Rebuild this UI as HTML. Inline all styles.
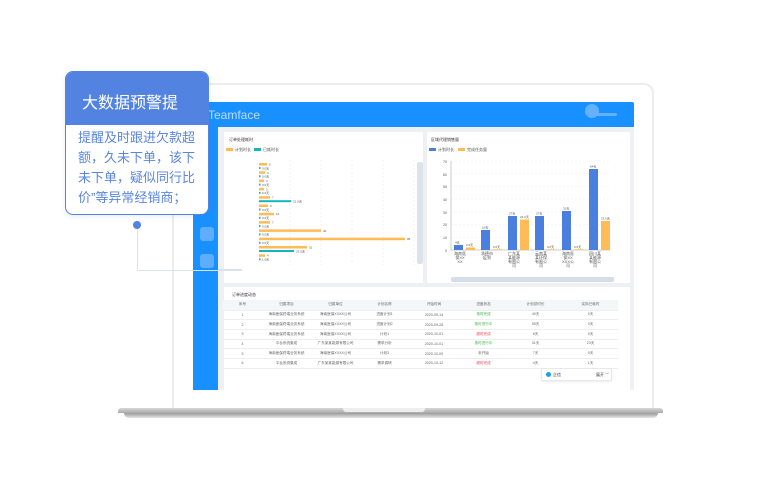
<!DOCTYPE html>
<html><head><meta charset="utf-8"><style>
*{margin:0;padding:0;box-sizing:border-box}
body{width:777px;height:500px;background:#fff;position:relative;overflow:hidden;font-family:"Liberation Sans","Noto Sans CJK SC",sans-serif}
.a{position:absolute}
.t{font-size:4px;color:#555;white-space:nowrap}
</style></head><body>
<!-- laptop frame -->
<div class="a" style="left:172px;top:83px;width:482px;height:328px;border:2px solid #ececec;border-bottom:none;border-radius:10px 10px 0 0;background:#fff"></div>
<div class="a" style="left:118px;top:408px;width:545px;height:5px;background:linear-gradient(#d8d8d8,#a9a9a9);border-radius:3px 3px 0 0"></div>
<div class="a" style="left:124px;top:413px;width:534px;height:5px;background:linear-gradient(#9a9a9a,#e6e6e6);border-radius:0 0 40px 40px"></div>
<div class="a" style="left:343px;top:408px;width:82px;height:4px;background:#eee;border-radius:0 0 3px 3px"></div>
<!-- screen -->
<div class="a" style="left:193px;top:102px;width:441px;height:25px;background:#1890ff;border-radius:2px 2px 0 0"></div>
<div class="a" style="left:208px;top:108px;color:#bfdcff;font-size:12px">Teamface</div>
<div class="a" style="left:585px;top:104px;width:14px;height:14px;border-radius:50%;background:#66b1ff"></div>
<div class="a" style="left:595px;top:113px;width:22px;height:3px;border-radius:2px;background:#66b1ff"></div>
<div class="a" style="left:193px;top:127px;width:25px;height:263px;background:#1890ff"></div>
<div class="a" style="left:200px;top:227px;width:14px;height:14px;border-radius:3px;background:#5eaeff"></div>
<div class="a" style="left:200px;top:254px;width:14px;height:14px;border-radius:3px;background:#5eaeff"></div>
<div class="a" style="left:218px;top:127px;width:416px;height:263px;background:#eef0f3"></div>
<!-- left chart -->
<div class="a" style="left:224px;top:132px;width:199px;height:151px;background:#fff"></div>
<div class="a t" style="left:229px;top:137px;color:#333">订单处理耗时</div>
<div class="a" style="left:226px;top:148px;width:7px;height:3px;background:#ffbb55"></div><div class="a t" style="left:235px;top:147px">计划时长</div>
<div class="a" style="left:254px;top:148px;width:7px;height:3px;background:#13b5c1"></div><div class="a t" style="left:263px;top:147px">已耗时长</div>
<div class="a" style="left:417px;top:162px;width:6px;height:102px;background:#dde3ec;border-radius:2px"></div>
<svg class="a" style="left:224px;top:160px" width="195" height="110" font-size="3" fill="#555" font-family="Liberation Sans">
<g stroke="#e5e5e5" stroke-dasharray="2,2" stroke-width="0.5"><line x1="66" y1="0" x2="66" y2="105"/><line x1="97" y1="0" x2="97" y2="105"/><line x1="128" y1="0" x2="128" y2="105"/><line x1="159" y1="0" x2="159" y2="105"/><line x1="190" y1="0" x2="190" y2="105"/></g>
<g fill="#ffbb55">
<rect x="35" y="3" width="8" height="2.5"/><rect x="35" y="11.3" width="6" height="2.5"/><rect x="35" y="19.6" width="5" height="2.5"/><rect x="35" y="27.9" width="5" height="2.5"/><rect x="35" y="36.2" width="11" height="2.5"/><rect x="35" y="44.5" width="9" height="2.5"/><rect x="35" y="52.8" width="15" height="2.5"/><rect x="35" y="61.1" width="11" height="2.5"/><rect x="35" y="69.4" width="62" height="2.5"/><rect x="35" y="77.7" width="146" height="2.5"/><rect x="35" y="86" width="48" height="2.5"/><rect x="35" y="94.3" width="6" height="2.5"/></g>
<g fill="#13b5c1">
<rect x="35" y="7" width="1.5" height="2"/><rect x="35" y="15.3" width="1.5" height="2"/><rect x="35" y="23.6" width="1.5" height="2"/><rect x="35" y="31.9" width="1.5" height="2"/><rect x="35" y="40.2" width="32" height="2"/><rect x="35" y="48.5" width="1.5" height="2"/><rect x="35" y="56.8" width="1.5" height="2"/><rect x="35" y="65.1" width="1.5" height="2"/><rect x="35" y="73.4" width="1.5" height="2"/><rect x="35" y="81.7" width="1.5" height="2"/><rect x="35" y="90" width="35" height="2"/><rect x="35" y="98.3" width="1.5" height="2"/></g>
<text x="45" y="5.5">5</text><text x="43" y="13.8">4</text><text x="42" y="22">3</text><text x="42" y="30.3">3</text><text x="48" y="38.6">7</text><text x="46" y="47">6</text><text x="52" y="55.2">10</text><text x="48" y="63.5">7</text><text x="99" y="71.8">40</text><text x="183" y="80.1">95</text><text x="85" y="88.4">31</text><text x="43" y="96.7">4</text>
<g><text x="38" y="9.3">0.0天</text><text x="38" y="17.6">0.0天</text><text x="38" y="25.9">0.0天</text><text x="38" y="34.2">0.0天</text><text x="69" y="42.5">21.0天</text><text x="38" y="50.8">0.0天</text><text x="38" y="59.1">0.0天</text><text x="38" y="67.4">0.0天</text><text x="38" y="75.7">0.0天</text><text x="38" y="84">0.0天</text><text x="72" y="92.3">23.0天</text><text x="38" y="100.6">1.0天</text></g>
</svg>
<div class="a" style="left:218px;top:269px;width:24px;height:1px;background:#d8e0ea"></div>
<!-- right chart -->
<div class="a" style="left:427px;top:132px;width:203px;height:151px;background:#fff"></div>
<div class="a t" style="left:431px;top:137px;color:#333">区域代理销售量</div>
<div class="a" style="left:429px;top:148px;width:7px;height:3px;background:#4a7fe0"></div><div class="a t" style="left:438px;top:147px">计划时长</div>
<div class="a" style="left:458px;top:148px;width:7px;height:3px;background:#ffbb55"></div><div class="a t" style="left:467px;top:147px">完成任务量</div>
<svg class="a" style="left:440px;top:158px" width="180" height="100" font-size="3.5" fill="#555" font-family="Liberation Sans">
<g stroke="#eee" stroke-dasharray="2,2" stroke-width="0.5"><line x1="11" y1="3" x2="170" y2="3"/><line x1="11" y1="15.7" x2="170" y2="15.7"/><line x1="11" y1="28.4" x2="170" y2="28.4"/><line x1="11" y1="41.1" x2="170" y2="41.1"/><line x1="11" y1="53.9" x2="170" y2="53.9"/><line x1="11" y1="66.6" x2="170" y2="66.6"/><line x1="11" y1="79.3" x2="170" y2="79.3"/></g>
<line x1="11" y1="3" x2="11" y2="92" stroke="#999" stroke-width="0.5"/><line x1="11" y1="92" x2="170" y2="92" stroke="#999" stroke-width="0.5"/>
<text x="3" y="5">70</text><text x="3" y="18">60</text><text x="3" y="30">50</text><text x="3" y="43">40</text><text x="3" y="56">30</text><text x="3" y="68">20</text><text x="3" y="81">10</text><text x="5" y="94">0</text>
<g fill="#4a7fe0"><rect x="14" y="87" width="9" height="5"/><rect x="41" y="72" width="9" height="20"/><rect x="68" y="58" width="9" height="34"/><rect x="95" y="58" width="9" height="34"/><rect x="122" y="53" width="9" height="39"/><rect x="149" y="11" width="9" height="81"/></g>
<g fill="#ffbb55"><rect x="26" y="89.5" width="9" height="2.5"/><rect x="80" y="61.5" width="9" height="30.5"/><rect x="161" y="63" width="9" height="29"/><rect x="53" y="91.3" width="9" height="0.7"/><rect x="107" y="91.3" width="9" height="0.7"/><rect x="134" y="91.3" width="9" height="0.7"/></g>
<g font-size="3"><text x="15" y="85.5">4天</text><text x="42" y="70.5">16天</text><text x="69" y="56.5">27天</text><text x="96" y="56.5">27天</text><text x="123" y="51.5">31天</text><text x="150" y="9.5">64天</text><text x="26" y="88">2.0天</text><text x="80" y="60">24.0天</text><text x="161" y="61.5">23.0天</text><text x="53" y="90">0.0天</text><text x="107" y="90">0.0天</text><text x="134" y="90">0.0天</text></g>
</svg>
<div class="a t" style="left:454px;top:252px;width:12px;text-align:center;line-height:4px">海南医<br>保XX<br>XX</div>
<div class="a t" style="left:481px;top:252px;width:12px;text-align:center;line-height:4px">承德市<br>疫到</div>
<div class="a t" style="left:508px;top:252px;width:12px;text-align:center;line-height:4px">广东某<br>某能源<br>有限公<br>司</div>
<div class="a t" style="left:535px;top:252px;width:12px;text-align:center;line-height:4px">云南某<br>某环保<br>有限公<br>司</div>
<div class="a t" style="left:562px;top:252px;width:12px;text-align:center;line-height:4px">海南医<br>保XX<br>XXX公<br>司</div>
<div class="a t" style="left:589px;top:252px;width:12px;text-align:center;line-height:4px">四川某<br>某能源<br>有限公<br>司</div>
<div class="a" style="left:451px;top:277px;width:163px;height:5px;background:#d5dde8;border-radius:2px"></div>
<!-- table -->
<div class="a" style="left:224px;top:287px;width:406px;height:103px;background:#fff"></div>
<div class="a t" style="left:232px;top:292px;color:#333">订单进度动态</div>
<table class="a" style="left:223px;top:300px;width:395px;border-collapse:collapse;font-size:3.6px;color:#666;text-align:center">
<colgroup><col style="width:39px"><col style="width:49px"><col style="width:49px"><col style="width:49px"><col style="width:50px"><col style="width:49px"><col style="width:55px"><col style="width:55px"></colgroup>
<tr style="background:#f5f6f8;height:10px"><td>序号</td><td>归属项目</td><td>归属单位</td><td>计划名称</td><td>开始时间</td><td>进度状态</td><td>计划总时长</td><td>实际已耗时</td></tr>
<tr style="height:9.7px;border-top:1px solid #eee"><td>1</td><td>海南医保终端业务系统</td><td>海南医保XXXX公司</td><td>进度计划1</td><td>2020-09-14</td><td style="color:#3cb54a">按时完成</td><td>40天</td><td>0天</td></tr>
<tr style="height:9.7px;border-top:1px solid #eee"><td>2</td><td>海南医保终端业务系统</td><td>海南医保XXXX公司</td><td>进度计划2</td><td>2020-09-28</td><td style="color:#3cb54a">按时进行中</td><td>95天</td><td>0天</td></tr>
<tr style="height:9.7px;border-top:1px solid #eee"><td>3</td><td>海南医保终端业务系统</td><td>海南医保XXXX公司</td><td>计划1</td><td>2020-10-01</td><td style="color:#f5414a">超时完成</td><td>6天</td><td>0天</td></tr>
<tr style="height:9.7px;border-top:1px solid #eee"><td>4</td><td>平台系统集成</td><td>广东某某能源有限公司</td><td>需求分析</td><td>2020-10-01</td><td style="color:#3cb54a">按时进行中</td><td>31天</td><td>23天</td></tr>
<tr style="height:9.7px;border-top:1px solid #eee"><td>5</td><td>海南医保终端业务系统</td><td>海南医保XXXX公司</td><td>计划3</td><td>2020-10-09</td><td>未开始</td><td>7天</td><td>0天</td></tr>
<tr style="height:9.7px;border-top:1px solid #eee;border-bottom:1px solid #eee"><td>6</td><td>平台系统集成</td><td>广东某某能源有限公司</td><td>需求调研</td><td>2020-10-12</td><td style="color:#f5414a">超时完成</td><td>4天</td><td>1天</td></tr>
</table>
<div class="a" style="left:541px;top:368px;width:71px;height:13px;background:#fff;border:1px solid #e8e8e8;border-radius:2px;box-shadow:0 1px 2px rgba(0,0,0,.08)"></div>
<div class="a" style="left:546px;top:372px;width:5px;height:5px;border-radius:50%;background:#1aa0f0"></div>
<div class="a t" style="left:553px;top:372px;color:#333">企信</div>
<div class="a t" style="left:596px;top:372px;color:#333">展开 ﹀</div>
<!-- callout -->
<div class="a" style="left:137px;top:225px;width:1px;height:46px;background:#dbe3ee"></div>
<div class="a" style="left:137px;top:270px;width:105px;height:1px;background:#dbe3ee"></div>
<div class="a" style="left:133px;top:221px;width:8px;height:8px;border-radius:50%;background:#5283e0"></div>
<div class="a" style="left:65px;top:71px;width:144px;height:144px;border:1px solid #5283e0;border-radius:8px;background:#fff;overflow:hidden;box-shadow:0 2px 6px rgba(80,120,200,.12)">
<div style="height:53px;background:#5283e0;color:#fff;font-size:16px;padding:17px 0 0 16px">大数据预警提</div>
<div style="color:#5a86de;font-size:13px;line-height:20px;padding:3px 0 0 12px;width:140px">提醒及时跟进欠款超额，久未下单，该下未下单，疑似同行比价”等异常经销商；</div>
</div>
</body></html>
